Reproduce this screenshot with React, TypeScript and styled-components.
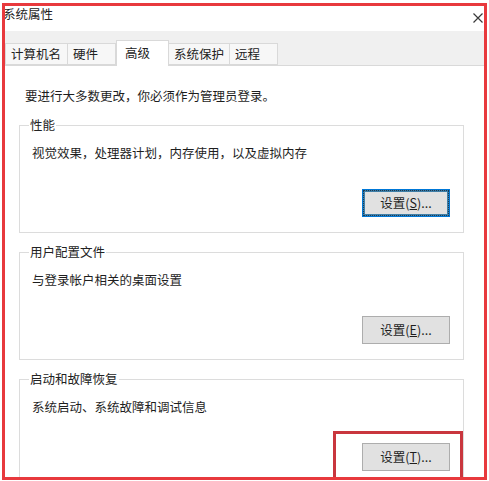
import React from "react";
import styled, { createGlobalStyle } from "styled-components";

const Global = createGlobalStyle`
  html, body { margin: 0; padding: 0; background: #ffffff; }
  body { width: 489px; height: 481px; overflow: hidden; }
  * { box-sizing: border-box; }
`;

const FONT = `"Noto Sans CJK SC", "Microsoft YaHei", "Noto Sans", sans-serif`;

const Frame = styled.div`
  margin: 3px 0 0 2px;
  width: 485px;
  height: 477px;
  border: 3px solid #e8393d;
  overflow: hidden;
  background: #ffffff;
  display: flex;
  flex-direction: column;
  font-family: ${FONT};
  font-size: 12.5px;
  color: #1e1e1e;
`;

const TitleBar = styled.div`
  height: 25px;
  flex: none;
  display: flex;
  justify-content: space-between;
  align-items: flex-start;
  background: #ffffff;
`;

const Title = styled.span`
  line-height: 16px;
  margin-left: -2px;
  color: #222;
`;

const Close = styled.span`
  width: 10px;
  height: 10px;
  margin: 2px 1px 0 0;
  display: block;
`;

const TabStrip = styled.div`
  height: 35px;
  flex: none;
  background: #f0f0f0;
  border-bottom: 1px solid #d9d9d9;
  display: flex;
  align-items: flex-end;
`;

const Tab = styled.div<{ $active?: boolean; $w: number }>`
  position: relative;
  width: ${(p) => p.$w}px;
  height: ${(p) => (p.$active ? 26 : 22)}px;
  margin-bottom: ${(p) => (p.$active ? -1 : 0)}px;
  margin-left: ${(p) => (p.$active ? 0 : -1)}px;
  z-index: ${(p) => (p.$active ? 1 : 0)};
  padding: ${(p) => (p.$active ? "2px 0 0 8px" : "0 0 0 5px")};
  background: ${(p) => (p.$active ? "#ffffff" : "#f7f7f7")};
  border: 1px solid #d9d9d9;
  border-bottom: ${(p) => (p.$active ? "none" : "1px solid #d9d9d9")};
  line-height: 20px;
  white-space: nowrap;
  color: #222;
  &:first-child { margin-left: 0; }
`;

const Content = styled.div`
  flex: 1;
  padding: 22px 20px 0 14px;
  display: flex;
  flex-direction: column;
  gap: 11px;
  background: #ffffff;
`;

const Intro = styled.p`
  margin: 0 0 2px 6px;
  line-height: 16px;
`;

const Group = styled.fieldset`
  margin: 0;
  min-width: 0;
  flex: none;
  padding: 0 13px 15px 12px;
  border: 1px solid #dcdcdc;
`;

const Legend = styled.legend`
  margin-left: -3px;
  padding: 0 1px;
  line-height: 16px;
  color: #222;
`;

const Desc = styled.div`
  margin-top: 12px;
  line-height: 16px;
`;

const ButtonRow = styled.div`
  margin-top: 28px;
  display: flex;
  justify-content: flex-end;
`;

const Anchor = styled.div`
  position: relative;
  display: flex;
`;

const Button = styled.button<{ $default?: boolean }>`
  width: 88px;
  height: 28px;
  padding: 0;
  font-family: ${FONT};
  font-size: 12.5px;
  color: #1e1e1e;
  background: #e1e1e1;
  border: 1px solid ${(p) => (p.$default ? "#0078d7" : "#adadad")};
  outline: ${(p) => (p.$default ? "1px dotted #1c3a52" : "none")};
  outline-offset: -2px;
  box-shadow: ${(p) => (p.$default ? "inset 0 0 0 2px #3f7fa8" : "none")};
  display: flex;
  align-items: center;
  justify-content: center;
  line-height: 16px;
  u { text-decoration-thickness: 1px; text-underline-offset: 1px; }
`;

const Highlight = styled.span`
  position: absolute;
  left: -29px;
  right: -13px;
  top: -12px;
  bottom: -9px;
  border: 3px solid #c9363e;
  pointer-events: none;
`;

const tabs = [
  { label: "计算机名", w: 63 },
  { label: "硬件", w: 49 },
  { label: "高级", w: 53, active: true },
  { label: "系统保护", w: 62 },
  { label: "远程", w: 49 },
];

type GroupData = {
  title: string;
  desc: string;
  key: string;
  isDefault?: boolean;
  marked?: boolean;
};

const groups: GroupData[] = [
  { title: "性能", desc: "视觉效果，处理器计划，内存使用，以及虚拟内存", key: "S", isDefault: true },
  { title: "用户配置文件", desc: "与登录帐户相关的桌面设置", key: "E" },
  { title: "启动和故障恢复", desc: "系统启动、系统故障和调试信息", key: "T", marked: true },
];

export default function App() {
  return (
    <>
      <Global />
      <Frame>
        <TitleBar>
          <Title>系统属性</Title>
          <Close>
            <svg width="10" height="10" viewBox="0 0 10 10">
              <path d="M0.5 0.5 L9.5 9.5 M9.5 0.5 L0.5 9.5" stroke="#3a3a3a" strokeWidth="1.2" fill="none" />
            </svg>
          </Close>
        </TitleBar>
        <TabStrip>
          {tabs.map((t) => (
            <Tab key={t.label} $active={t.active} $w={t.w}>
              {t.label}
            </Tab>
          ))}
        </TabStrip>
        <Content>
          <Intro>要进行大多数更改，你必须作为管理员登录。</Intro>
          {groups.map((g) => (
            <Group key={g.title}>
              <Legend>{g.title}</Legend>
              <Desc>{g.desc}</Desc>
              <ButtonRow>
                <Anchor>
                  <Button $default={g.isDefault}>
                    设置(<u>{g.key}</u>)...
                  </Button>
                  {g.marked && <Highlight />}
                </Anchor>
              </ButtonRow>
            </Group>
          ))}
        </Content>
      </Frame>
    </>
  );
}
